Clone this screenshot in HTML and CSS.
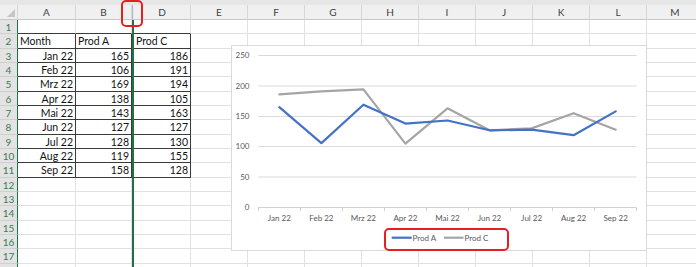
FILE: index.html
```html
<!DOCTYPE html>
<html>
<head>
<meta charset="utf-8">
<link rel="stylesheet" href="styles.css">
</head>
<body>
<div class="page">
  <div class="strip"></div>
  <div class="sheet">
    <div class="ch corner"><span class="tri"></span></div>
    <div class="ch">A</div><div class="ch">B</div><div class="ch hid"></div><div class="ch">D</div>
    <div class="ch">E</div><div class="ch">F</div><div class="ch">G</div><div class="ch">H</div><div class="ch">I</div><div class="ch">J</div><div class="ch">K</div><div class="ch">L</div><div class="ch">M</div>

    <div class="rh">1</div><div class="c top"></div><div class="c top"></div><div class="hc"></div><div class="c top"></div>
    <div class="c"></div><div class="c"></div><div class="c"></div><div class="c"></div><div class="c"></div><div class="c"></div><div class="c"></div><div class="c"></div><div class="c"></div>

    <div class="rh">2</div><div class="t">Month</div><div class="t">Prod A</div><div class="hc"></div><div class="t">Prod C</div>
    <div class="c"></div><div class="c"></div><div class="c"></div><div class="c"></div><div class="c"></div><div class="c"></div><div class="c"></div><div class="c"></div><div class="c"></div>

    <div class="rh">3</div><div class="t r">Jan 22</div><div class="t r">165</div><div class="hc"></div><div class="t r">186</div>
    <div class="c"></div><div class="c"></div><div class="c"></div><div class="c"></div><div class="c"></div><div class="c"></div><div class="c"></div><div class="c"></div><div class="c"></div>

    <div class="rh">4</div><div class="t r">Feb 22</div><div class="t r">106</div><div class="hc"></div><div class="t r">191</div>
    <div class="c"></div><div class="c"></div><div class="c"></div><div class="c"></div><div class="c"></div><div class="c"></div><div class="c"></div><div class="c"></div><div class="c"></div>

    <div class="rh">5</div><div class="t r">Mrz 22</div><div class="t r">169</div><div class="hc"></div><div class="t r">194</div>
    <div class="c"></div><div class="c"></div><div class="c"></div><div class="c"></div><div class="c"></div><div class="c"></div><div class="c"></div><div class="c"></div><div class="c"></div>

    <div class="rh">6</div><div class="t r">Apr 22</div><div class="t r">138</div><div class="hc"></div><div class="t r">105</div>
    <div class="c"></div><div class="c"></div><div class="c"></div><div class="c"></div><div class="c"></div><div class="c"></div><div class="c"></div><div class="c"></div><div class="c"></div>

    <div class="rh">7</div><div class="t r">Mai 22</div><div class="t r">143</div><div class="hc"></div><div class="t r">163</div>
    <div class="c"></div><div class="c"></div><div class="c"></div><div class="c"></div><div class="c"></div><div class="c"></div><div class="c"></div><div class="c"></div><div class="c"></div>

    <div class="rh">8</div><div class="t r">Jun 22</div><div class="t r">127</div><div class="hc"></div><div class="t r">127</div>
    <div class="c"></div><div class="c"></div><div class="c"></div><div class="c"></div><div class="c"></div><div class="c"></div><div class="c"></div><div class="c"></div><div class="c"></div>

    <div class="rh">9</div><div class="t r">Jul 22</div><div class="t r">128</div><div class="hc"></div><div class="t r">130</div>
    <div class="c"></div><div class="c"></div><div class="c"></div><div class="c"></div><div class="c"></div><div class="c"></div><div class="c"></div><div class="c"></div><div class="c"></div>

    <div class="rh">10</div><div class="t r">Aug 22</div><div class="t r">119</div><div class="hc"></div><div class="t r">155</div>
    <div class="c"></div><div class="c"></div><div class="c"></div><div class="c"></div><div class="c"></div><div class="c"></div><div class="c"></div><div class="c"></div><div class="c"></div>

    <div class="rh">11</div><div class="t r">Sep 22</div><div class="t r">158</div><div class="hc"></div><div class="t r">128</div>
    <div class="c"></div><div class="c"></div><div class="c"></div><div class="c"></div><div class="c"></div><div class="c"></div><div class="c"></div><div class="c"></div><div class="c"></div>

    <div class="rh">12</div><div class="c"></div><div class="c"></div><div class="hc"></div><div class="c"></div>
    <div class="c"></div><div class="c"></div><div class="c"></div><div class="c"></div><div class="c"></div><div class="c"></div><div class="c"></div><div class="c"></div><div class="c"></div>

    <div class="rh">13</div><div class="c"></div><div class="c"></div><div class="hc"></div><div class="c"></div>
    <div class="c"></div><div class="c"></div><div class="c"></div><div class="c"></div><div class="c"></div><div class="c"></div><div class="c"></div><div class="c"></div><div class="c"></div>

    <div class="rh">14</div><div class="c"></div><div class="c"></div><div class="hc"></div><div class="c"></div>
    <div class="c"></div><div class="c"></div><div class="c"></div><div class="c"></div><div class="c"></div><div class="c"></div><div class="c"></div><div class="c"></div><div class="c"></div>

    <div class="rh">15</div><div class="c"></div><div class="c"></div><div class="hc"></div><div class="c"></div>
    <div class="c"></div><div class="c"></div><div class="c"></div><div class="c"></div><div class="c"></div><div class="c"></div><div class="c"></div><div class="c"></div><div class="c"></div>

    <div class="rh">16</div><div class="c"></div><div class="c"></div><div class="hc"></div><div class="c"></div>
    <div class="c"></div><div class="c"></div><div class="c"></div><div class="c"></div><div class="c"></div><div class="c"></div><div class="c"></div><div class="c"></div><div class="c"></div>

    <div class="rh">17</div><div class="c"></div><div class="c"></div><div class="hc"></div><div class="c"></div>
    <div class="c"></div><div class="c"></div><div class="c"></div><div class="c"></div><div class="c"></div><div class="c"></div><div class="c"></div><div class="c"></div><div class="c"></div>

    <div class="rh"></div><div class="c"></div><div class="c"></div><div class="hc"></div><div class="c"></div>
    <div class="c"></div><div class="c"></div><div class="c"></div><div class="c"></div><div class="c"></div><div class="c"></div><div class="c"></div><div class="c"></div><div class="c"></div>
  </div>

  <div class="chart">
    <svg width="416" height="206" viewBox="0 0 416 206" xmlns="http://www.w3.org/2000/svg">
      <rect x="0.5" y="0.5" width="415" height="205" fill="#fff" stroke="#d9d9d9"/>
      <g stroke="#d9d9d9" stroke-width="1">
        <line x1="27.3" y1="10.5" x2="405.7" y2="10.5"/>
        <line x1="27.3" y1="41" x2="405.7" y2="41"/>
        <line x1="27.3" y1="71.5" x2="405.7" y2="71.5"/>
        <line x1="27.3" y1="101.5" x2="405.7" y2="101.5"/>
        <line x1="27.3" y1="132" x2="405.7" y2="132"/>
      </g>
      <g stroke="#d0d0d0" stroke-width="1">
        <line x1="27.3" y1="162.5" x2="405.7" y2="162.5"/>
        <line x1="27.5" y1="162.5" x2="27.5" y2="166"/>
        <line x1="69.5" y1="162.5" x2="69.5" y2="166"/>
        <line x1="111.5" y1="162.5" x2="111.5" y2="166"/>
        <line x1="153.5" y1="162.5" x2="153.5" y2="166"/>
        <line x1="195.5" y1="162.5" x2="195.5" y2="166"/>
        <line x1="237.5" y1="162.5" x2="237.5" y2="166"/>
        <line x1="279.5" y1="162.5" x2="279.5" y2="166"/>
        <line x1="321.5" y1="162.5" x2="321.5" y2="166"/>
        <line x1="363.5" y1="162.5" x2="363.5" y2="166"/>
        <line x1="405.5" y1="162.5" x2="405.5" y2="166"/>
      </g>
      <g class="ylab" text-anchor="end">
        <text x="18.5" y="13.3">250</text>
        <text x="18.5" y="43.8">200</text>
        <text x="18.5" y="74.3">150</text>
        <text x="18.5" y="104.3">100</text>
        <text x="18.5" y="134.8">50</text>
        <text x="18.5" y="165.3">0</text>
      </g>
      <g class="xlab" text-anchor="middle">
        <text x="48.3" y="176.3">Jan 22</text>
        <text x="90.4" y="176.3">Feb 22</text>
        <text x="132.4" y="176.3">Mrz 22</text>
        <text x="174.4" y="176.3">Apr 22</text>
        <text x="216.5" y="176.3">Mai 22</text>
        <text x="258.5" y="176.3">Jun 22</text>
        <text x="300.6" y="176.3">Jul 22</text>
        <text x="342.6" y="176.3">Aug 22</text>
        <text x="384.7" y="176.3">Sep 22</text>
      </g>
      <polyline fill="none" stroke="#a5a5a5" stroke-width="2.2" stroke-linejoin="round" stroke-linecap="round"
        points="48.3,49.3 90.4,46.3 132.4,44.4 174.4,98.7 216.5,63.3 258.5,85.3 300.6,83.4 342.6,68.2 384.7,84.7"/>
      <polyline fill="none" stroke="#4472c4" stroke-width="2.2" stroke-linejoin="round" stroke-linecap="round"
        points="48.3,62.1 90.4,98.1 132.4,59.7 174.4,78.6 216.5,75.5 258.5,85.3 300.6,84.7 342.6,90.2 384.7,66.4"/>
      <line x1="160.7" y1="192.7" x2="180.7" y2="192.7" stroke="#4472c4" stroke-width="2.2"/>
      <text class="leg" x="181.5" y="195.5">Prod A</text>
      <line x1="213" y1="192.7" x2="232.5" y2="192.7" stroke="#a5a5a5" stroke-width="2.2"/>
      <text class="leg" x="233.5" y="195.5">Prod C</text>
    </svg>
  </div>

  <div class="mark mark-col"></div>
  <div class="mark mark-legend"></div>
</div>
</body>
</html>
```

FILE: styles.css
```css
html, body {
  margin: 0;
  padding: 0;
  background: #fff;
  overflow: hidden;
}

.page {
  position: relative;
  width: 696px;
  height: 267px;
  overflow: hidden;
  font-family: Lato, "Liberation Sans", sans-serif;
}

.strip {
  height: 5px;
  background: #e6e6e6;
}

.sheet {
  display: grid;
  grid-template-columns: 18px 58px 56px 2px repeat(10, 57px);
  grid-template-rows: 15px;
  grid-auto-rows: 14.33px;
}

.sheet > div {
  box-sizing: border-box;
  min-width: 0;
  overflow: hidden;
  white-space: nowrap;
}

.ch {
  background: #f0f0f0;
  border-right: 1px solid #d6d6d6;
  border-bottom: 1px solid #c8c8c8;
  font-size: 10px;
  line-height: 14px;
  color: #404040;
  text-align: center;
}

.ch.corner {
  position: relative;
  background: #f0f0f0;
}

.tri {
  position: absolute;
  right: 2px;
  bottom: 2px;
  width: 0;
  height: 0;
  border-left: 8px solid transparent;
  border-bottom: 8px solid #c6c6c6;
}

.ch.hid {
  border-right: 0;
  background: linear-gradient(90deg, #b9b9b9 0, #b9b9b9 1px, #e8e8e8 1px);
}

.rh {
  background: #e3e3e3;
  border-right: 1px solid #217346;
  border-bottom: 1px solid #cfcfcf;
  color: #3d7a52;
  font-size: 10px;
  line-height: 14px;
  text-align: center;
}

.c {
  border-right: 1px solid #e1e1e1;
  border-bottom: 1px solid #e1e1e1;
}

.c.top {
  border-bottom-color: #3a3a3a;
}

.hc {
  background: #217346;
}

.t {
  border-right: 1px solid #3a3a3a;
  border-bottom: 1px solid #3a3a3a;
  font-size: 10.5px;
  line-height: 14px;
  color: #111;
  padding: 0 2px;
}

.t.r {
  text-align: right;
}

.chart {
  position: absolute;
  left: 231px;
  top: 45px;
  width: 416px;
  height: 206px;
}

.chart svg {
  display: block;
}

.ylab text, .xlab text, .leg {
  font-family: Lato, "Liberation Sans", sans-serif;
  font-size: 8px;
  fill: #595959;
}

.mark {
  position: absolute;
  box-sizing: border-box;
  border: 2px solid #e5211f;
  border-radius: 5px;
}

.mark-col {
  left: 121px;
  top: 0;
  width: 22px;
  height: 27px;
}

.mark-legend {
  left: 384px;
  top: 228px;
  width: 125px;
  height: 23px;
}
```
